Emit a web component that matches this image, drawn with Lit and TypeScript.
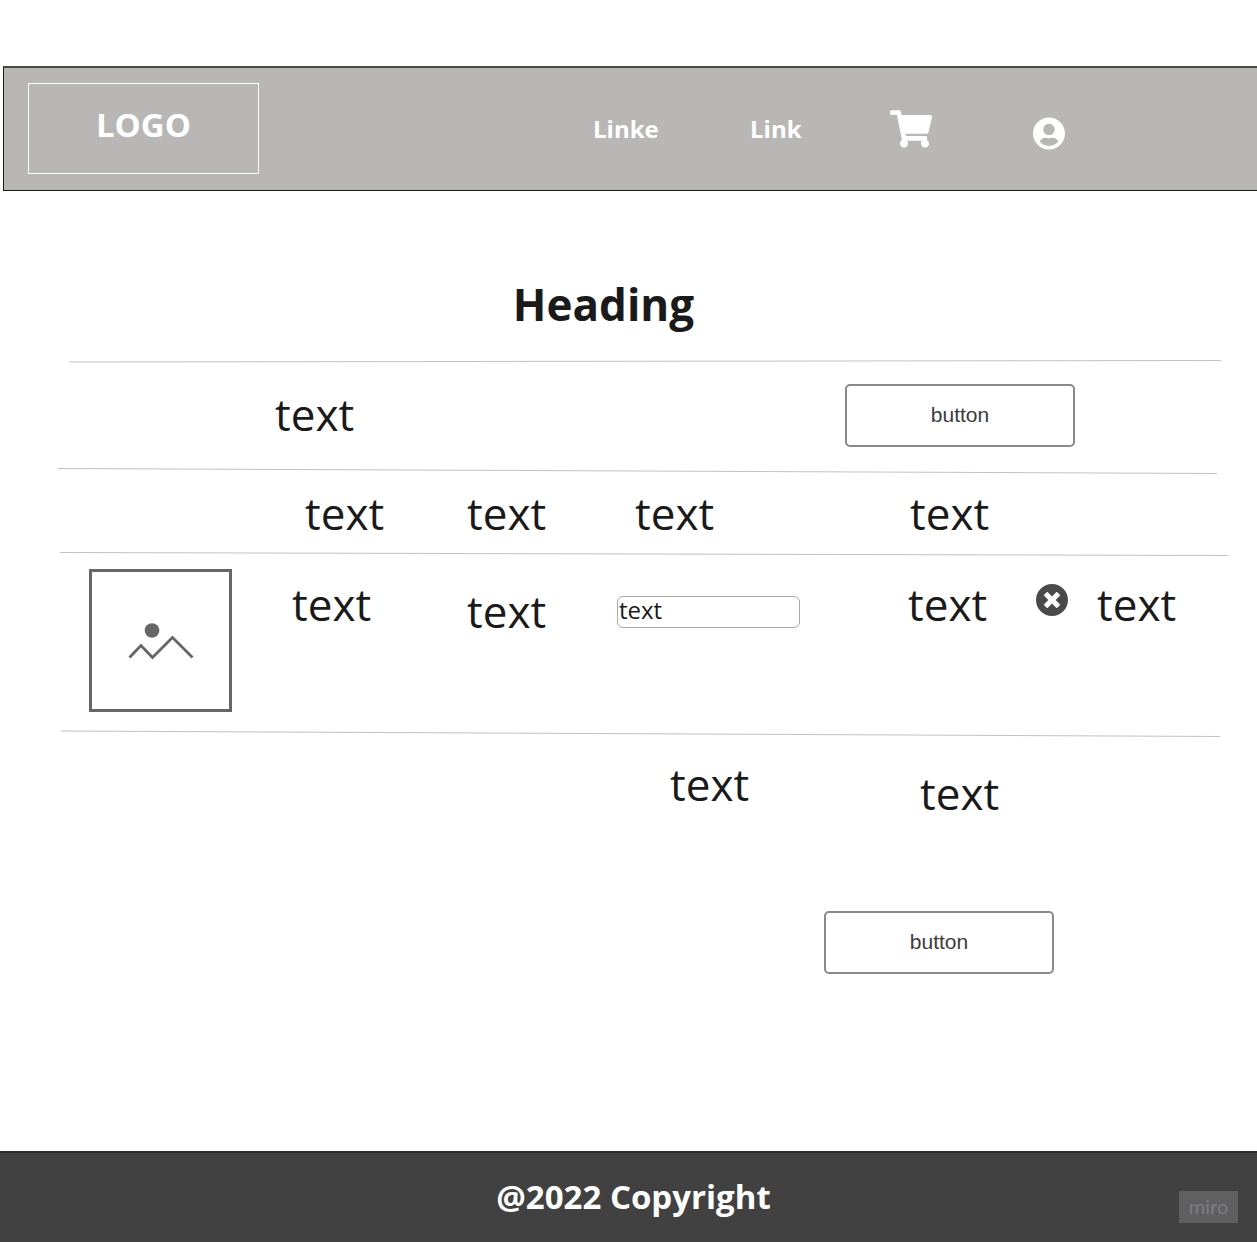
import { LitElement, html, css, svg } from "lit";
import { customElement, property } from "lit/decorators.js";

const cartPath =
  "M528.12 301.319l47.273-208C578.806 78.301 567.391 64 551.99 64H159.208l-9.166-44.81C147.758 8.021 137.93 0 126.529 0H24C10.745 0 0 10.745 0 24v16c0 13.255 10.745 24 24 24h69.883l70.248 343.435C147.325 417.1 136 435.222 136 456c0 30.928 25.072 56 56 56s56-25.072 56-56c0-15.674-6.447-29.835-16.824-40h209.647C430.447 426.165 424 440.326 424 456c0 30.928 25.072 56 56 56s56-25.072 56-56c0-22.172-12.888-41.332-31.579-50.405l5.517-24.276c3.413-15.018-8.002-29.319-23.403-29.319H218.117l-6.545-32h293.145c11.206 0 20.92-7.754 23.403-18.681z";
const userPath =
  "M248 8C111 8 0 119 0 256s111 248 248 248 248-111 248-248S385 8 248 8zm0 96c48.6 0 88 39.4 88 88s-39.4 88-88 88-88-39.4-88-88 39.4-88 88-88zm0 344c-58.7 0-111.3-26.6-146.5-68.2 18.8-35.4 55.6-59.8 98.5-59.8 2.4 0 4.8.4 7.1 1.1 13 4.2 26.6 6.9 40.9 6.9 14.3 0 28-2.7 40.9-6.9 2.3-.7 4.7-1.1 7.1-1.1 42.9 0 79.7 24.4 98.5 59.8C359.3 421.4 306.7 448 248 448z";
const closePath =
  "M256 8C119 8 8 119 8 256s111 248 248 248 248-111 248-248S393 8 256 8zm121.6 313.1c4.7 4.7 4.7 12.3 0 17L338 377.6c-4.7 4.7-12.3 4.7-17 0L256 312l-65.1 65.6c-4.7 4.7-12.3 4.7-17 0L134.4 338c-4.7-4.7-4.7-12.3 0-17l65.6-65-65.6-65.1c-4.7-4.7-4.7-12.3 0-17l39.6-39.6c4.7-4.7 12.3-4.7 17 0l65 65.7 65.1-65.6c4.7-4.7 12.3-4.7 17 0l39.6 39.6c4.7 4.7 4.7 12.3 0 17L312 256l65.6 65.1z";

/** A thin, slightly slanted line across the page. */
@customElement("hand-divider")
export class HandDivider extends LitElement {
  /** x1, y1, x2, y2 on a 1257 by 8 field. */
  @property({ attribute: false }) line: number[] = [60, 4, 1220, 4];

  static styles = css`
    :host {
      display: block;
      height: 8px;
    }
    .field {
      display: block;
      width: 100%;
      height: 8px;
    }
  `;

  render() {
    const [x1, y1, x2, y2] = this.line;
    return html`<svg class="field" viewBox="0 0 1257 8" preserveAspectRatio="none" aria-hidden="true">
      ${svg`<line x1=${x1} y1=${y1} x2=${x2} y2=${y2} stroke="#c2c2c2" stroke-width="1" vector-effect="non-scaling-stroke" />`}
    </svg>`;
  }
}

@customElement("app-root")
export class AppRoot extends LitElement {
  static styles = css`
    :host {
      display: flex;
      flex-direction: column;
      min-height: 100vh;
      box-sizing: border-box;
      padding-top: 66px;
      background: #fff;
      color: #1a1a1a;
      font-family: "Open Sans", "Noto Sans", sans-serif;
      font-size: 44px;
      font-weight: 400;
      line-height: 60px;
    }
    *,
    *::before {
      box-sizing: border-box;
    }
    a {
      color: inherit;
      text-decoration: none;
    }
    .bar {
      display: grid;
      grid-template-columns: minmax(0, 589fr) minmax(0, 157fr) minmax(0, 140fr) minmax(0, 143fr) minmax(0, 224fr);
      align-items: center;
      height: 125px;
      margin-left: 3px;
      background: #b8b7b5;
      border: 1px solid #1a1a1a;
      border-width: 2px 0 1px 1px;
      border-top-color: #4a4a4a;
      color: #fff;
      font-size: 24px;
      font-weight: 700;
      line-height: 32px;
    }
    .logo {
      align-self: start;
      justify-self: start;
      display: block;
      width: 231px;
      height: 91px;
      margin: 15px 0 0 24px;
      padding-top: 18px;
      border: 1px solid #fff;
      font-size: 33px;
      line-height: 46px;
      text-align: center;
    }
    .icon-link {
      display: flex;
    }
    .account {
      padding-top: 8px;
    }
    svg {
      display: block;
    }
    h1 {
      margin: 83px 0 24px;
      padding-right: 50px;
      font-size: 44px;
      font-weight: 700;
      line-height: 60px;
      text-align: center;
    }
    .intro {
      display: grid;
      grid-template-columns: minmax(0, 275fr) minmax(0, 570fr) minmax(0, 412fr);
      height: 100px;
      padding-top: 18px;
    }
    .intro p {
      grid-column: 2;
      margin: 0;
    }
    .action {
      width: 230px;
      height: 63px;
      padding: 0 0 2px;
      background: #fff;
      border: 2px solid #8a8a8a;
      border-radius: 5px;
      color: #3c3c3c;
      font: 400 21px/24px "Liberation Sans", Arial, sans-serif;
      text-align: center;
    }
    table,
    thead,
    tbody {
      display: block;
    }
    tr {
      display: grid;
    }
    th,
    td {
      display: block;
      padding: 0;
      font-weight: 400;
      text-align: left;
    }
    .head {
      grid-template-columns: minmax(0, 305fr) minmax(0, 162fr) minmax(0, 168fr) minmax(0, 275fr) minmax(0, 347fr);
      height: 76px;
      padding-top: 9px;
    }
    .item {
      grid-template-columns:
        minmax(0, 89fr) minmax(0, 203fr) minmax(0, 175fr) minmax(0, 150fr) minmax(0, 291fr)
        minmax(0, 128fr) minmax(0, 61fr) minmax(0, 160fr);
      height: 172px;
      padding-top: 11px;
    }
    .cell {
      padding-top: 5px;
    }
    .low {
      padding-top: 12px;
    }
    .amount {
      padding-top: 27px;
    }
    .thumb {
      width: 143px;
      height: 143px;
      border: 3px solid #666;
    }
    .field {
      display: block;
      width: 183px;
      height: 32px;
      padding: 0 0 6px 1px;
      background: #fff;
      border: 1px solid #a9a9a9;
      border-radius: 6px;
      color: #1a1a1a;
      font: inherit;
      font-size: 24px;
      line-height: 24px;
    }
    .remove {
      display: block;
      margin-top: 15px;
      padding: 0;
      background: none;
      border: 0;
    }
    .totals {
      display: grid;
      grid-template-columns: minmax(0, 670fr) minmax(0, 250fr) minmax(0, 337fr);
      padding-top: 16px;
    }
    .totals p {
      margin: 0;
    }
    .totals p:first-child {
      grid-column: 2;
    }
    .totals p:last-child {
      padding-top: 9px;
    }
    .checkout {
      display: grid;
      grid-template-columns: minmax(0, 824fr) minmax(0, 433fr);
      padding: 88px 0 40px;
    }
    .checkout .action {
      grid-column: 2;
    }
    footer {
      position: relative;
      height: 91px;
      margin-top: auto;
      padding: 21px 0 0 10px;
      background: #414141;
      border-top: 2px solid #2b2b2b;
      color: #fff;
      font-size: 33px;
      font-weight: 700;
      line-height: 46px;
      text-align: center;
    }
    .badge {
      position: absolute;
      right: 19px;
      bottom: 19px;
      width: 59px;
      height: 32px;
      background: #606060;
      color: #7c7c86;
      font: 400 20px/30px Lato, sans-serif;
      text-align: center;
    }
  `;

  private divider(line: number[]) {
    return html`<hand-divider .line=${line}></hand-divider>`;
  }

  render() {
    return html`
      <header class="bar">
        <a class="logo" href="#">LOGO</a>
        <a href="#">Linke</a>
        <a href="#">Link</a>
        <a class="icon-link" href="#" aria-label="Cart">
          <svg width="42" height="38" viewBox="0 0 576 512" fill="#fff"><path d=${cartPath} /></svg>
        </a>
        <a class="icon-link account" href="#" aria-label="Account">
          <svg width="32" height="33" viewBox="0 0 496 512" fill="#fff"><path d=${userPath} /></svg>
        </a>
      </header>
      <main>
        <h1>Heading</h1>
        ${this.divider([69, 4, 1221, 2.5])}
        <section class="intro">
          <p>text</p>
          <button class="action" type="button">button</button>
        </section>
        ${this.divider([58, 2.5, 1217, 7.5])}
        <table>
          <thead>
            <tr class="head">
              <td></td>
              <th scope="col">text</th>
              <th scope="col">text</th>
              <th scope="col">text</th>
              <th scope="col">text</th>
            </tr>
            <tr>
              <td>${this.divider([60, 2.5, 1228, 5.5])}</td>
            </tr>
          </thead>
          <tbody>
            <tr class="item">
              <td></td>
              <td>
                <svg class="thumb" viewBox="0 0 137 137" fill="none" aria-hidden="true">
                  <circle cx="60" cy="58.5" r="7.3" fill="#666" />
                  <path d="M37.5 85.5L49 73.5L60.5 85.5L80.5 65.5L100.5 85.5" stroke="#666" stroke-width="2.8" />
                </svg>
              </td>
              <td class="cell">text</td>
              <td class="low">text</td>
              <td class="amount"><input class="field" type="text" aria-label="Amount" value="text" /></td>
              <td class="cell">text</td>
              <td>
                <button class="remove" type="button" aria-label="Remove">
                  <svg width="32" height="32" viewBox="8 8 496 496" fill="#4a4a4a"><path d=${closePath} /></svg>
                </button>
              </td>
              <td class="cell">text</td>
            </tr>
          </tbody>
        </table>
        ${this.divider([61, 1, 1220, 6.5])}
        <section class="totals">
          <p>text</p>
          <p>text</p>
        </section>
        <div class="checkout">
          <button class="action" type="button">button</button>
        </div>
      </main>
      <footer>
        @2022 Copyright
        <span class="badge">miro</span>
      </footer>
    `;
  }
}
